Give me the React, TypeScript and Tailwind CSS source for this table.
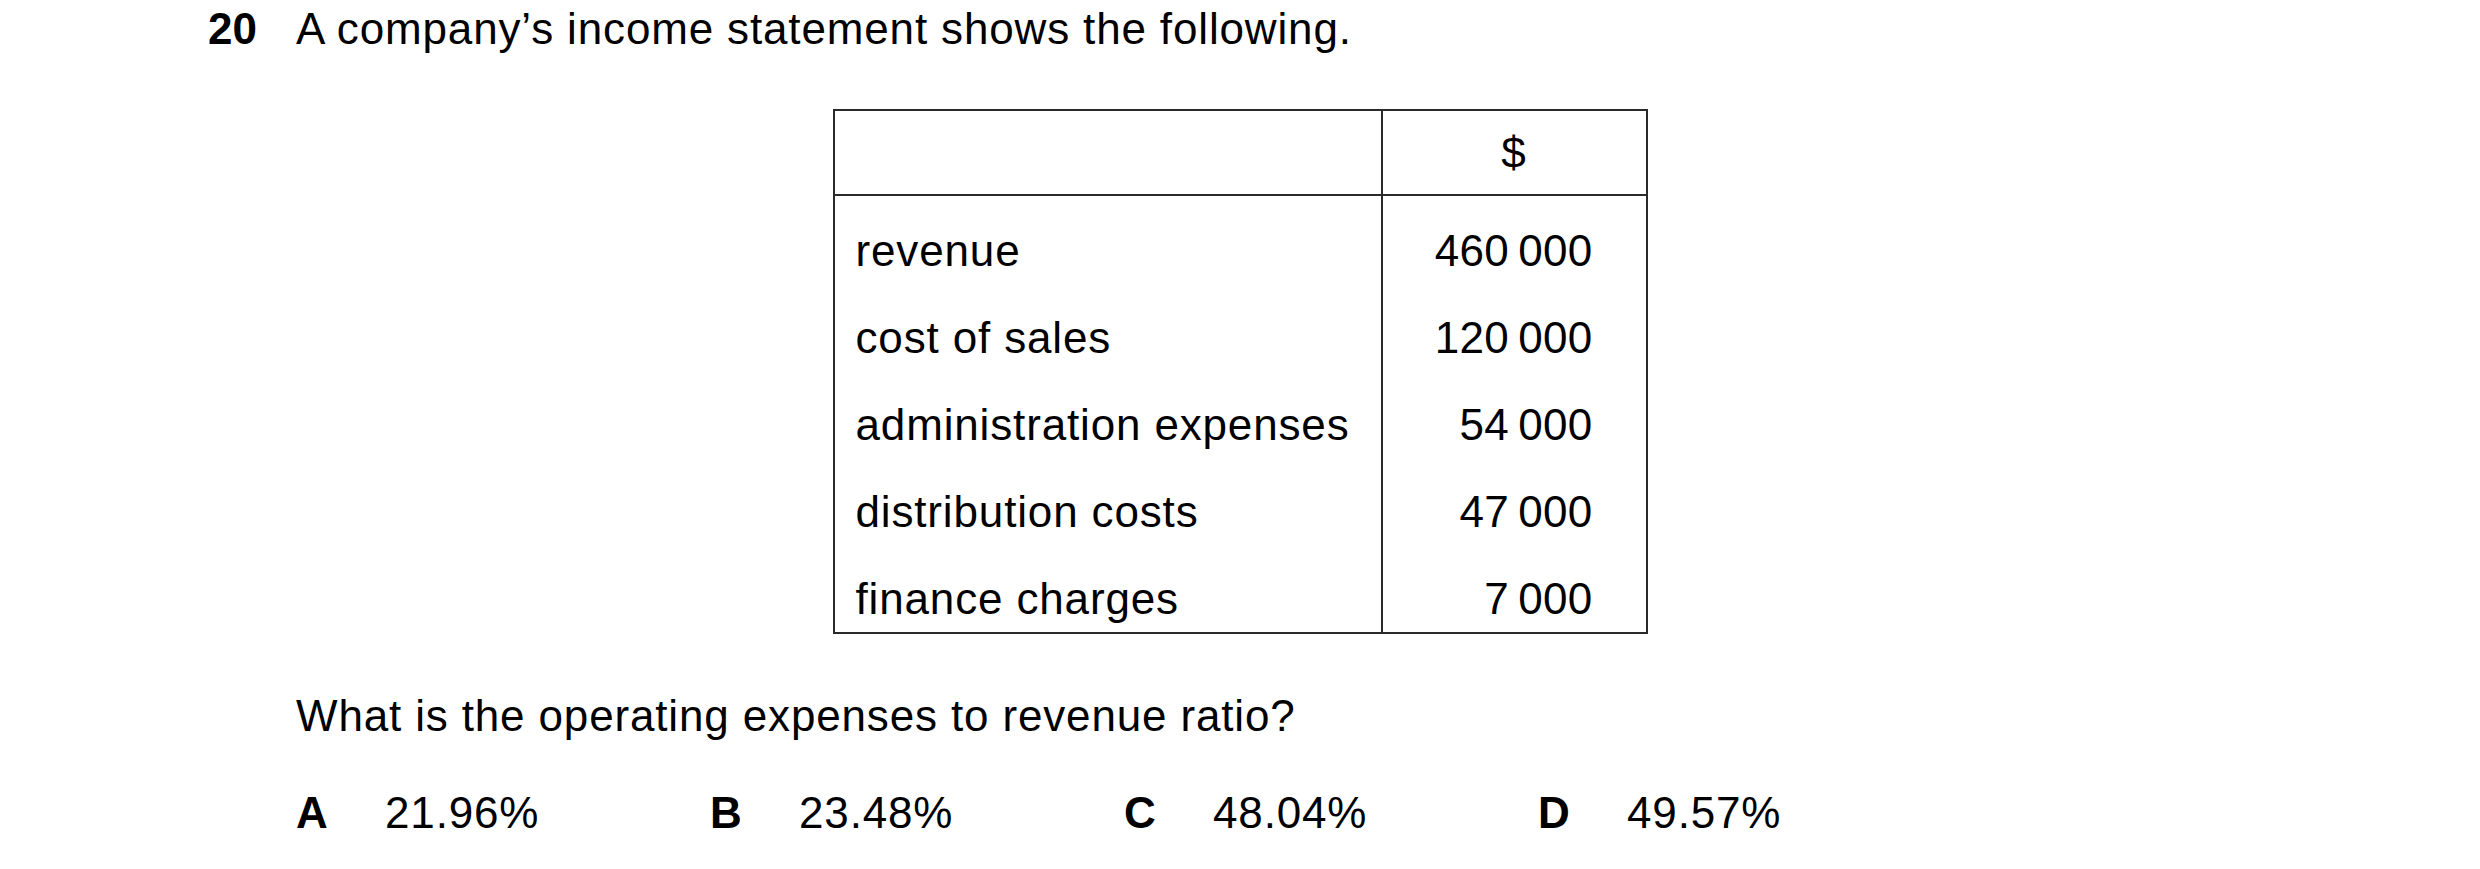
const rows = [
  { label: "revenue", amount: "460\u2009000" },
  { label: "cost of sales", amount: "120\u2009000" },
  { label: "administration expenses", amount: "54\u2009000" },
  { label: "distribution costs", amount: "47\u2009000" },
  { label: "finance charges", amount: "7\u2009000" },
];

const options = [
  { key: "A", value: "21.96%" },
  { key: "B", value: "23.48%" },
  { key: "C", value: "48.04%" },
  { key: "D", value: "49.57%" },
];

export default function App() {
  return (
    <div className="min-h-[869px] w-[2480px] bg-white font-['Liberation_Sans',Arial,sans-serif] text-[44px] leading-[50px] tracking-[0.85px] text-black">
      {/* Question header */}
      <div className="flex pl-[208px] pt-[4px]">
        <span className="w-[88px] font-bold tracking-normal">20</span>
        <p>A company’s income statement shows the following.</p>
      </div>

      {/* Income statement table */}
      <div className="mx-auto mt-[55px] w-[815px] border-2 border-[#2a2a2a]">
        <div className="grid h-[85px] grid-cols-[548px_1fr] border-b-2 border-[#2a2a2a]">
          <div className="border-r-2 border-[#2a2a2a]" />
          <div className="flex items-center justify-center">$</div>
        </div>
        {rows.map((row, i) => (
          <div key={row.label} className="grid grid-cols-[548px_1fr] leading-[67px]">
            <div
              className={`border-r-2 border-[#2a2a2a] pl-[21px] ${
                i === 0 ? "pt-[21px]" : "pt-[20px]"
              }`}
            >
              {row.label}
            </div>
            <div
              className={`whitespace-nowrap pr-[53px] text-right tracking-[0.3px] ${
                i === 0 ? "pt-[21px]" : "pt-[20px]"
              }`}
            >
              {row.amount}
            </div>
          </div>
        ))}
      </div>

      <p className="mt-[57px] pl-[296px]">
        What is the operating expenses to revenue ratio?
      </p>

      {/* Answer options */}
      <div className="mt-[47px] grid w-fit grid-cols-[414px_414px_414px_414px] pl-[296px]">
        {options.map((opt) => (
          <div key={opt.key} className="flex">
            <span className="w-[89px] font-bold tracking-normal">{opt.key}</span>
            <span>{opt.value}</span>
          </div>
        ))}
      </div>
    </div>
  );
}
